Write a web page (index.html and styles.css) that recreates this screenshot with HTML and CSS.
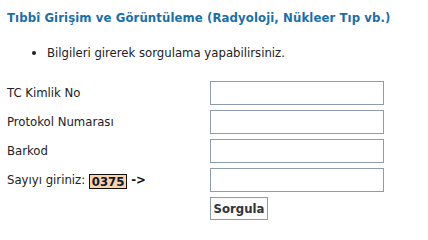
FILE: index.html
```html
<!DOCTYPE html>
<html lang="tr">
<head>
<meta charset="utf-8">
<title>Tıbbî Girişim ve Görüntüleme</title>
<link rel="stylesheet" href="styles.css">
</head>
<body>
<div class="page">
  <h1 class="title">Tıbbî Girişim ve Görüntüleme (Radyoloji, Nükleer Tıp vb.)</h1>
  <ul class="info">
    <li>Bilgileri girerek sorgulama yapabilirsiniz.</li>
  </ul>
  <form class="form">
    <label class="label" for="tc">TC Kimlik No</label>
    <input class="field" id="tc" type="text">
    <label class="label" for="prot">Protokol Numarası</label>
    <input class="field" id="prot" type="text">
    <label class="label" for="bar">Barkod</label>
    <input class="field" id="bar" type="text">
    <label class="label" for="cap">Sayıyı giriniz: <span class="captcha">0375</span> <b class="arrow">-&gt;</b></label>
    <input class="field" id="cap" type="text">
    <span></span>
    <div><button class="btn" type="button">Sorgula</button></div>
  </form>
</div>
</body>
</html>
```

FILE: styles.css
```css
html, body {
  margin: 0;
  padding: 0;
  background: #fff;
}
.page {
  padding: 10px 7px 0 7px;
  font-family: "DejaVu Sans Condensed", "DejaVu Sans", Verdana, sans-serif;
  font-size: 13px;
  color: #222;
}
.title {
  margin: 0;
  font-size: 13px;
  line-height: 16px;
  font-weight: bold;
  letter-spacing: 0.1px;
  color: #1a6fa8;
}
.info {
  margin: 19px 0 0 0;
  padding: 0 0 0 40px;
  line-height: 16px;
}
.form {
  margin-top: 20px;
  display: grid;
  grid-template-columns: 203px 174px;
  row-gap: 5px;
  align-items: center;
}
.label {
  line-height: 16px;
}
.field {
  box-sizing: border-box;
  width: 174px;
  height: 24px;
  margin: 0;
  border: 1px solid #8d9ca8;
  background: #fff;
  padding: 2px 4px;
  font: inherit;
}
.captcha {
  display: inline-block;
  background: #fbd3a6;
  border: 1px solid #111;
  padding: 0 2px;
  font-weight: bold;
  font-size: 13px;
  line-height: 13px;
  color: #0d1a33;
  vertical-align: -2px;
}
.arrow {
  color: #111;
}
.btn {
  box-sizing: border-box;
  height: 23px;
  width: 58px;
  padding: 0;
  margin: 0;
  border: 1px solid #8d9ca8;
  background: #fbfbfb;
  font-family: "DejaVu Sans Condensed", "DejaVu Sans", sans-serif;
  font-weight: bold;
  font-size: 13px;
  color: #333;
}
```
